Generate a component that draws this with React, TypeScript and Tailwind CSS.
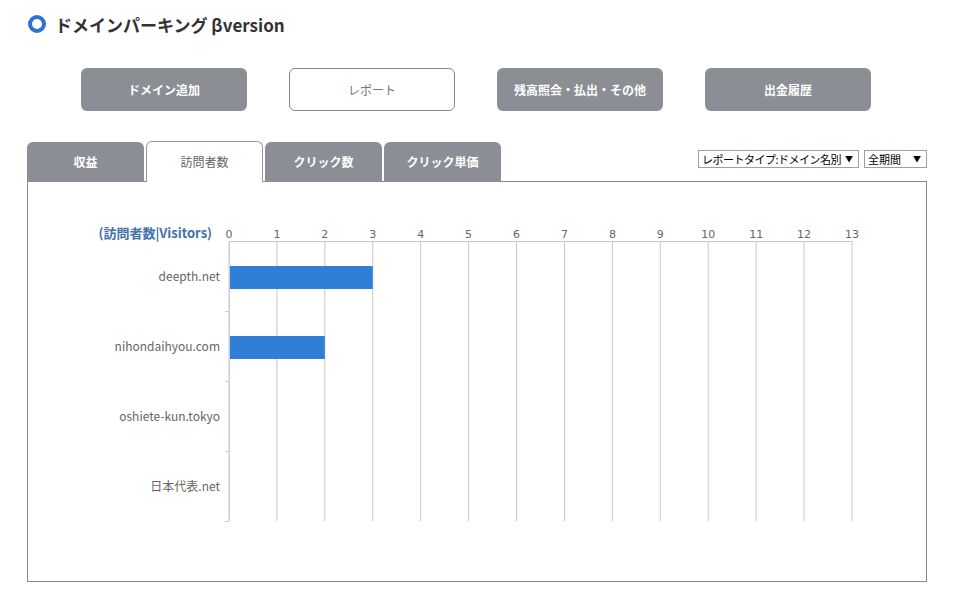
import React from "react";

const buttons = [
  { label: "ドメイン追加", active: false },
  { label: "レポート", active: true },
  { label: "残高照会・払出・その他", active: false },
  { label: "出金履歴", active: false },
];

const tabs = [
  { label: "収益", active: false },
  { label: "訪問者数", active: true },
  { label: "クリック数", active: false },
  { label: "クリック単価", active: false },
];

const rows = [
  { name: "deepth.net", value: 3 },
  { name: "nihondaihyou.com", value: 2 },
  { name: "oshiete-kun.tokyo", value: 0 },
  { name: "日本代表.net", value: 0 },
];

const X0 = 201;
const X1 = 824;
const TOP = 59;
const BAND = 70;
const MAX = 13;
const step = (X1 - X0) / MAX;

const Chart = () => {
  const ticks = Array.from({ length: MAX + 1 }, (_, i) => i);
  const bottom = TOP + BAND * rows.length;

  return (
    <svg width="898" height="399" className="block">
      {/* vertical grid */}
      {ticks.map((t) => (
        <line
          key={t}
          x1={X0 + t * step}
          x2={X0 + t * step}
          y1={TOP}
          y2={bottom}
          stroke="#c8c8c8"
          strokeWidth="1"
        />
      ))}
      <line x1={X0} x2={X1} y1={TOP + 0.5} y2={TOP + 0.5} stroke="#c8c8c8" />
      <line x1={X0 + 0.5} x2={X0 + 0.5} y1={TOP} y2={bottom} stroke="#c0d0e0" />
      {rows.map((_, i) => (
        <line
          key={i}
          x1={X0 - 4}
          x2={X0}
          y1={TOP + BAND * (i + 1) + 0.5}
          y2={TOP + BAND * (i + 1) + 0.5}
          stroke="#c0d0e0"
        />
      ))}

      {/* axis labels */}
      {ticks.map((t) => (
        <text
          key={t}
          x={X0 + t * step}
          y={56}
          textAnchor="middle"
          fontSize="11"
          fill="#666"
          fontFamily="'DejaVu Sans', sans-serif"
        >
          {t}
        </text>
      ))}
      <text
        x={184}
        y={56}
        textAnchor="end"
        fontSize="13"
        fontWeight="bold"
        fill="#4572a7"
        fontFamily="'Noto Sans CJK JP', sans-serif"
      >
        (訪問者数|Visitors)
      </text>

      {/* bars */}
      {rows.map((r, i) => (
        <g key={r.name}>
          <text
            x={192}
            y={TOP + BAND * i + 40}
            textAnchor="end"
            fontSize="12"
            fill="#666"
            fontFamily="'Noto Sans CJK JP', sans-serif"
          >
            {r.name}
          </text>
          {r.value > 0 && (
            <rect
              x={X0 + 1}
              y={TOP + BAND * i + 25}
              width={r.value * step - 1}
              height={23}
              fill="#2f7ed8"
            />
          )}
        </g>
      ))}
    </svg>
  );
};

const App = () => {
  return (
    <div
      className="w-[963px] h-[598px] bg-white px-[27px] text-[#333]"
      style={{ fontFamily: "'Noto Sans CJK JP', 'Noto Sans', sans-serif" }}
    >
      {/* Title */}
      <div className="flex items-center gap-[9px] pt-[11px] h-[37px]">
        <div className="w-[18px] h-[18px] rounded-full border-[4px] border-[#2f73d0] bg-white ml-px" />
        <h1 className="text-[17px] font-bold text-[#333] leading-none">
          ドメインパーキング βversion
        </h1>
      </div>

      {/* Menu buttons */}
      <div className="flex gap-[42px] pl-[54px] mt-[31px]">
        {buttons.map((b) => (
          <div
            key={b.label}
            className={
              b.active
                ? "w-[166px] h-[43px] rounded-[6px] border border-[#888] bg-white text-[#777] text-[12px] flex items-center justify-center"
                : "w-[166px] h-[43px] rounded-[6px] bg-[#8b8e94] text-white text-[12px] font-bold flex items-center justify-center"
            }
          >
            {b.label}
          </div>
        ))}
      </div>

      {/* Tabs + selects */}
      <div className="w-[900px] flex justify-between items-start mt-[30px]">
        <div className="flex gap-[2px] relative z-10 -mb-px">
          {tabs.map((t) => (
            <div
              key={t.label}
              className={
                t.active
                  ? "w-[117px] h-[41px] rounded-t-[6px] border border-b-0 border-[#999] bg-white text-[#666] text-[12px] flex items-center justify-center"
                  : "w-[117px] h-[40px] mt-px rounded-t-[6px] bg-[#8b8e94] text-white text-[12px] font-bold flex items-center justify-center"
              }
            >
              {t.label}
            </div>
          ))}
        </div>
        <div className="flex gap-[5px] mt-[9px] text-[11px] text-black whitespace-nowrap">
          <div className="w-[161px] h-[18px] border border-[#a0a0a0] flex items-center justify-between pl-[3px] pr-[5px] leading-none">
            <span className="tracking-[-0.5px]">レポートタイプ:ドメイン名別</span>
            <span className="text-[8px]">▼</span>
          </div>
          <div className="w-[63px] h-[18px] border border-[#a0a0a0] flex items-center justify-between pl-[3px] pr-[5px] leading-none">
            <span>全期間</span>
            <span className="text-[8px]">▼</span>
          </div>
        </div>
      </div>

      {/* Chart box */}
      <div className="w-[900px] h-[401px] border border-[#888] bg-white">
        <Chart />
      </div>
    </div>
  );
};

export default App;
